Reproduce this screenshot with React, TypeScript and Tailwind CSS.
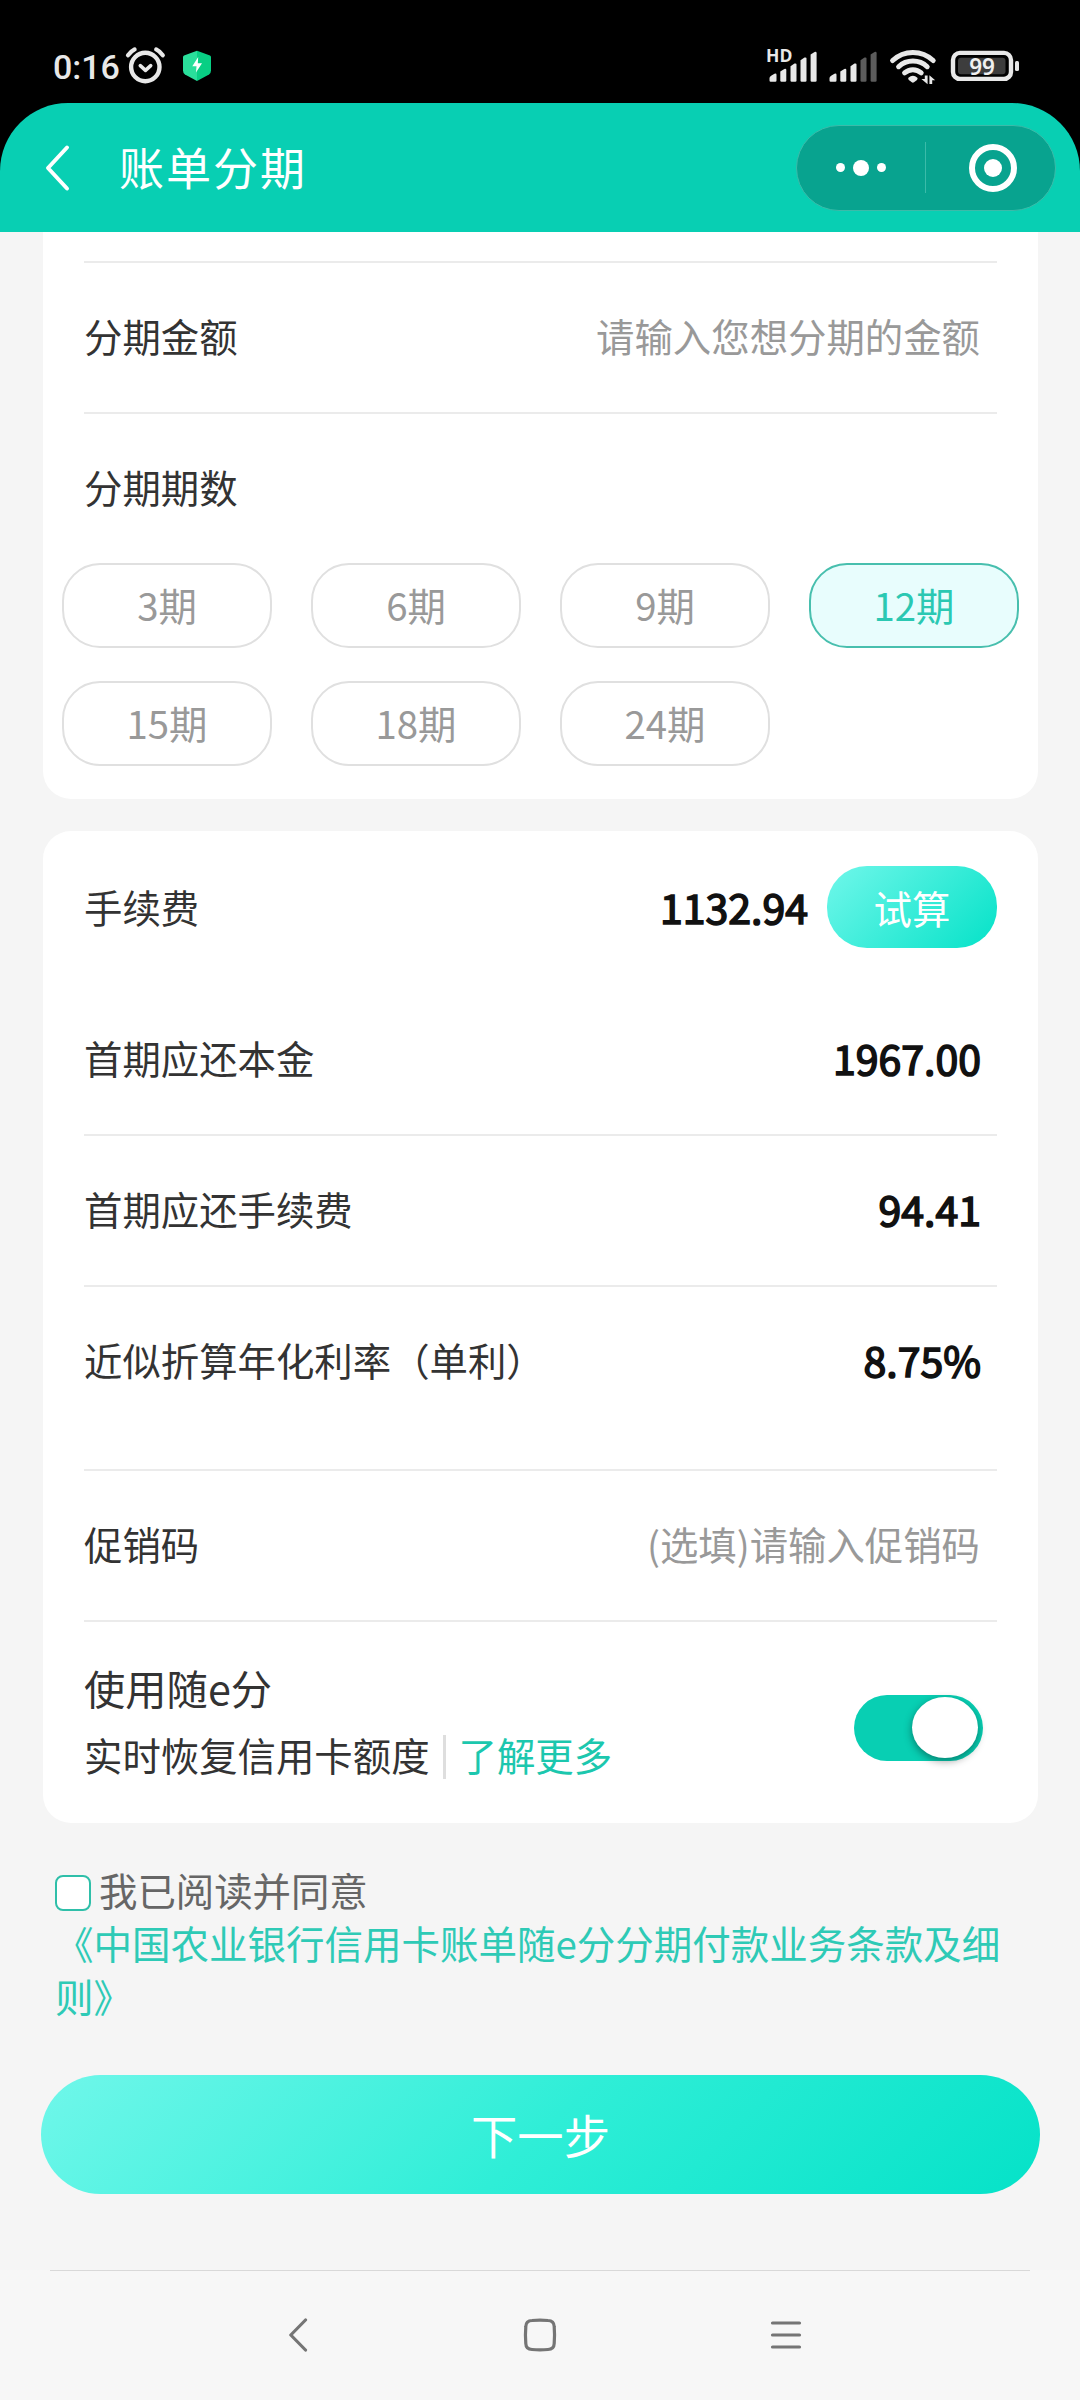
import { useState, type ReactNode } from "react";

const cjk = "font-['Noto_Sans_CJK_SC','Noto_Sans',sans-serif]";

function StatusBar() {
  return (
    <div className="flex h-[103px] items-start justify-between bg-black pt-[44px] pr-[60px] pl-[53px]">
      <div className="flex h-[46px] items-center">
        <span className="w-[71px] font-['Roboto',sans-serif] text-[34px] leading-[46px] font-medium text-[#e8e8e8]">
          0:16
        </span>
        <svg width="44" height="46" viewBox="0 0 44 46" fill="none" stroke="#e8e8e8" strokeLinecap="round">
          <circle cx="21.3" cy="23" r="14.2" strokeWidth="4.4" />
          <path d="M16.3 21.7l5.2 4.6 5.2-4.6" strokeWidth="3.6" strokeLinejoin="round" />
          <path d="M4 11.2q3-4 6.6-5.8M38.8 11.2q-3-4-6.600-5.800" strokeWidth="4.2" />
        </svg>
        <svg className="ml-[15px]" width="28" height="46" viewBox="0 0 28 46">
          <path d="M14 6.7L1 11.5Q0 12 0 13v13.5Q0 29 2 30.500L14 37z" fill="#2adf9b" />
          <path d="M14 6.7l13 4.8q1 .5 1 1.500v13.500q0 2.500-2 4L14 37z" fill="#08cf84" />
          <path d="M15.200 13L9.300 22.200h4.200L13 28.500l6-9.300h-4.200z" fill="#fff" />
        </svg>
      </div>
      <svg width="254" height="46" viewBox="766 44 254 46">
        <text x="766" y="62.3" fontSize="17.5" fontWeight="700" fill="#e8e8e8" className="font-['Open_Sans',sans-serif]">HD</text>
        <g fill="#e8e8e8">
          <path d="M769.5 78q0-1.500 2-2.500l3-1.700q2-.7 2 1V80.500q0 1.200-1.200 1.200h-4.600q-1.200 0-1.200-1.200z" />
          <path d="M780.300 71.500l4-2.600q2-.6 2 1V80.500q0 1.200-1.200 1.200h-3.600q-1.200 0-1.200-1.200z" />
          <path d="M790.500 66.200l4-2.600q2-.6 2 1V80.500q0 1.200-1.200 1.200h-3.600q-1.200 0-1.200-1.200z" />
          <path d="M800.500 60.200l4-2.600q2-.6 2 1V80.500q0 1.200-1.200 1.200h-3.600q-1.200 0-1.200-1.200z" />
          <path d="M810.600 54.500l4-2.600q2-.6 2 1V80.500q0 1.200-1.200 1.200h-3.600q-1.200 0-1.200-1.200z" />
          <path d="M829.500 78q0-1.500 2-2.500l3-1.700q2-.7 2 1V80.500q0 1.200-1.200 1.200h-4.600q-1.200 0-1.200-1.200z" />
          <path d="M840.300 71.500l4-2.600q2-.6 2 1V80.500q0 1.200-1.200 1.200h-3.600q-1.200 0-1.200-1.200z" />
          <path d="M850.500 66.200l4-2.600q2-.6 2 1V80.500q0 1.200-1.200 1.200h-3.600q-1.200 0-1.200-1.200z" />
        </g>
        <g fill="#5c5c5c">
          <path d="M860.500 60.200l4-2.600q2-.6 2 1V80.500q0 1.200-1.200 1.200h-3.600q-1.200 0-1.200-1.200z" />
          <path d="M870.600 54.500l4-2.600q2-.6 2 1V80.500q0 1.200-1.200 1.200h-3.600q-1.200 0-1.200-1.200z" />
        </g>
        <g fill="none" stroke="#e8e8e8" strokeWidth="5" strokeLinecap="round">
          <path d="M892.600 60.500a29.500 29.500 0 0 1 40.600 0" />
          <path d="M898.600 66.700a20.800 20.800 0 0 1 28.600 0" />
          <path d="M904.600 72.800a12.500 12.500 0 0 1 16.600 0" />
        </g>
        <path d="M908.400 77.800q4.500-4 9 0q.6 1-.4 2.200l-3 2.300q-1.100.7-2.200 0l-3-2.300q-1-1.200-.4-2.200z" fill="#e8e8e8" />
        <path d="M924.800 75.500h2.800v8.700l-6.200-5.200h3.400zM929.400 84v-8.800l5.800 5h-3v3.800z" fill="#e8e8e8" />
        <rect x="953" y="52.900" width="58" height="26" rx="7" fill="none" stroke="#e8e8e8" strokeWidth="4.400" />
        <rect x="958" y="57.700" width="47.500" height="16.500" rx="3" fill="#3d3d3d" />
        <rect x="1015" y="61" width="4" height="10" rx="1.500" fill="#e8e8e8" />
        <text x="982" y="74.600" textAnchor="middle" fontSize="22.500" fontWeight="600" fill="#f0f0f0" className="font-['Noto_Sans',sans-serif]">99</text>
      </svg>
    </div>
  );
}

function Header() {
  return (
    <div className="bg-black">
      <header className="flex h-[129px] items-center justify-between rounded-t-[68px] bg-[#08cfb3] pr-[24px] pl-[44px]">
        <div className="flex items-center">
          <svg width="28" height="50" viewBox="0 0 28 50" fill="none" stroke="#fff" strokeWidth="4" strokeLinecap="round" strokeLinejoin="round">
            <path d="M23 4.500L4 25l19 20.500" />
          </svg>
          <h1 className="ml-[47px] pb-[1px] text-[45px] leading-[60px] tracking-[2px] text-white">账单分期</h1>
        </div>
        <div className="flex h-[86px] w-[260px] items-center rounded-full border border-[#3bbba9] bg-[#08a38f]">
          <div className="flex w-[128px] items-center justify-center gap-[8px]">
            <i className="size-[9px] rounded-full bg-white" />
            <i className="size-[16px] rounded-full bg-white" />
            <i className="size-[9px] rounded-full bg-white" />
          </div>
          <div className="h-[51px] w-px bg-[#3bbba9]" />
          <div className="ml-[43px] flex size-[48px] items-center justify-center rounded-full border-[6px] border-white">
            <i className="size-[18px] rounded-full bg-white" />
          </div>
        </div>
      </header>
    </div>
  );
}

function Row({ label, line = true, children }: { label: string; line?: boolean; children?: ReactNode }) {
  return (
    <div className={`flex h-[151px] items-center justify-between border-t-2 ${line ? "border-[#ebebeb]" : "border-transparent"}`}>
      <span className="pb-[6px] text-[38.4px] leading-[56px] text-[#333]">{label}</span>
      {children}
    </div>
  );
}

function Amount({ children }: { children: ReactNode }) {
  return (
    <span className="mr-[16px] pb-[6px] text-[41px] leading-[56px] text-[#111] [-webkit-text-stroke:1.6px_#111]">{children}</span>
  );
}

function Hint({ children }: { children: ReactNode }) {
  return <span className="mr-[17px] pb-[6px] text-[38.4px] leading-[56px] text-[#999]">{children}</span>;
}

const terms = ["3期", "6期", "9期", "12期", "15期", "18期", "24期"];

export default function App() {
  const [term, setTerm] = useState("12期");
  return (
    <div className={`flex h-[2400px] w-[1080px] flex-col overflow-hidden bg-[#f5f5f5] ${cjk}`}>
      <StatusBar />
      <Header />
      <main className="flex h-[2038px] flex-col">
        <section className="mr-[42px] ml-[43px] h-[567px] rounded-b-[28px] bg-white pt-[29px]">
          <div className="px-[41px]">
            <Row label="分期金额">
              <Hint>请输入您想分期的金额</Hint>
            </Row>
            <Row label="分期期数" />
          </div>
          <div className="mx-[19px] grid grid-cols-4 gap-x-[39px] gap-y-[33px]">
            {terms.map((t) => (
              <button
                key={t}
                onClick={() => setTerm(t)}
                className={`h-[85px] rounded-[38px] border-2 pb-[3px] text-[38.4px] leading-[56px] ${
                  t === term ? "border-[#48bfae] bg-[#e8fdfd] text-[#2bc8b2]" : "border-[#e0e0e0] text-[#999]"
                }`}
              >
                {t}
              </button>
            ))}
          </div>
        </section>

        <section className="mt-[32px] mr-[42px] ml-[43px] h-[992px] rounded-[28px] bg-white px-[41px] pt-[1px]">
          <Row label="手续费" line={false}>
            <div className="flex items-center">
              <Amount>1132.94</Amount>
              <button className="mb-[4px] ml-[3px] h-[82px] w-[170px] rounded-[40px] bg-[linear-gradient(135deg,#70f7ea,#05e2c8)] text-[38.4px] leading-[56px] text-white">
                试算
              </button>
            </div>
          </Row>
          <Row label="首期应还本金" line={false}>
            <Amount>1967.00</Amount>
          </Row>
          <Row label="首期应还手续费">
            <Amount>94.41</Amount>
          </Row>
          <Row label="近似折算年化利率（单利）">
            <Amount>8.75%</Amount>
          </Row>
          <div className="h-[33px]" />
          <Row label="促销码">
            <Hint>(选填)请输入促销码</Hint>
          </Row>
          <div className="flex h-[202px] justify-between border-t-2 border-[#ebebeb]">
            <div className="pt-[35px]">
              <div className="text-[41.3px] leading-[60px] text-[#333]">使用随e分</div>
              <div className="mt-[8px] flex items-center text-[38.4px] leading-[58px] text-[#333]">
                实时恢复信用卡额度
                <i className="mx-[13px] mt-[6px] h-[44px] w-[3px] bg-[#dedede]" />
                <a className="text-[#1cc7ae]">了解更多</a>
              </div>
            </div>
            <div className="mt-[73px] mr-[14px] flex h-[66px] w-[129px] items-start justify-end rounded-[33px] bg-[#08cfb3] pt-[2px] pr-[5px]">
              <i className="h-[61px] w-[66px] rounded-[50%] bg-white shadow-[0_3px_8px_rgba(0,0,0,0.4)]" />
            </div>
          </div>
        </section>

        <div className="mt-[40px] ml-[55px] h-[160px] w-[960px] text-[38.4px] leading-[53px]">
          <div className="flex items-start">
            <i className="mt-[12px] size-[36px] rounded-[8px] border-2 border-[#2fbfa9] bg-white" />
            <span className="ml-[8px] text-[#666]">我已阅读并同意</span>
          </div>
          <p className="text-[38.5px] text-[#2ecab6]">
            《中国农业银行信用卡账单随e分分期付款业务条款及细
            <br />
            则》
          </p>
        </div>

        <button className="mt-[52px] ml-[41px] h-[119px] w-[999px] rounded-full bg-[linear-gradient(135deg,#70f7ea,#2feed7_50%,#05e2c8)] pb-[2px] text-[46.3px] leading-[60px] text-white">
          下一步
        </button>
      </main>

      <nav className="h-[130px] bg-[#f7f7f7]">
        <div className="mx-[50px] h-px bg-[#d9d9d9]" />
        <div className="flex h-[128px] items-center pl-[282px]">
          <svg width="34" height="34" viewBox="0 0 34 34" fill="none" stroke="#757575" strokeWidth="3.200" strokeLinecap="round" strokeLinejoin="round">
            <path d="M23.500 2L8.800 17l14.700 15" />
          </svg>
          <svg className="ml-[207px]" width="34" height="34" viewBox="0 0 34 34" fill="none" stroke="#757575" strokeWidth="3.200">
            <path d="M9 2.500q8-.8 16 0q6 .2 6.200 6q.7 8.500 0 17q-.2 5.800-6.200 6q-8 .8-16 0q-6-.2-6.200-6q-.7-8.500 0-17q.2-5.800 6.200-6z" />
          </svg>
          <svg className="ml-[212px]" width="34" height="34" viewBox="0 0 34 34" stroke="#757575" strokeWidth="3.200" strokeLinecap="round">
            <path d="M3.500 5h27M3.500 17h27M3.500 29h27" />
          </svg>
        </div>
      </nav>
    </div>
  );
}
